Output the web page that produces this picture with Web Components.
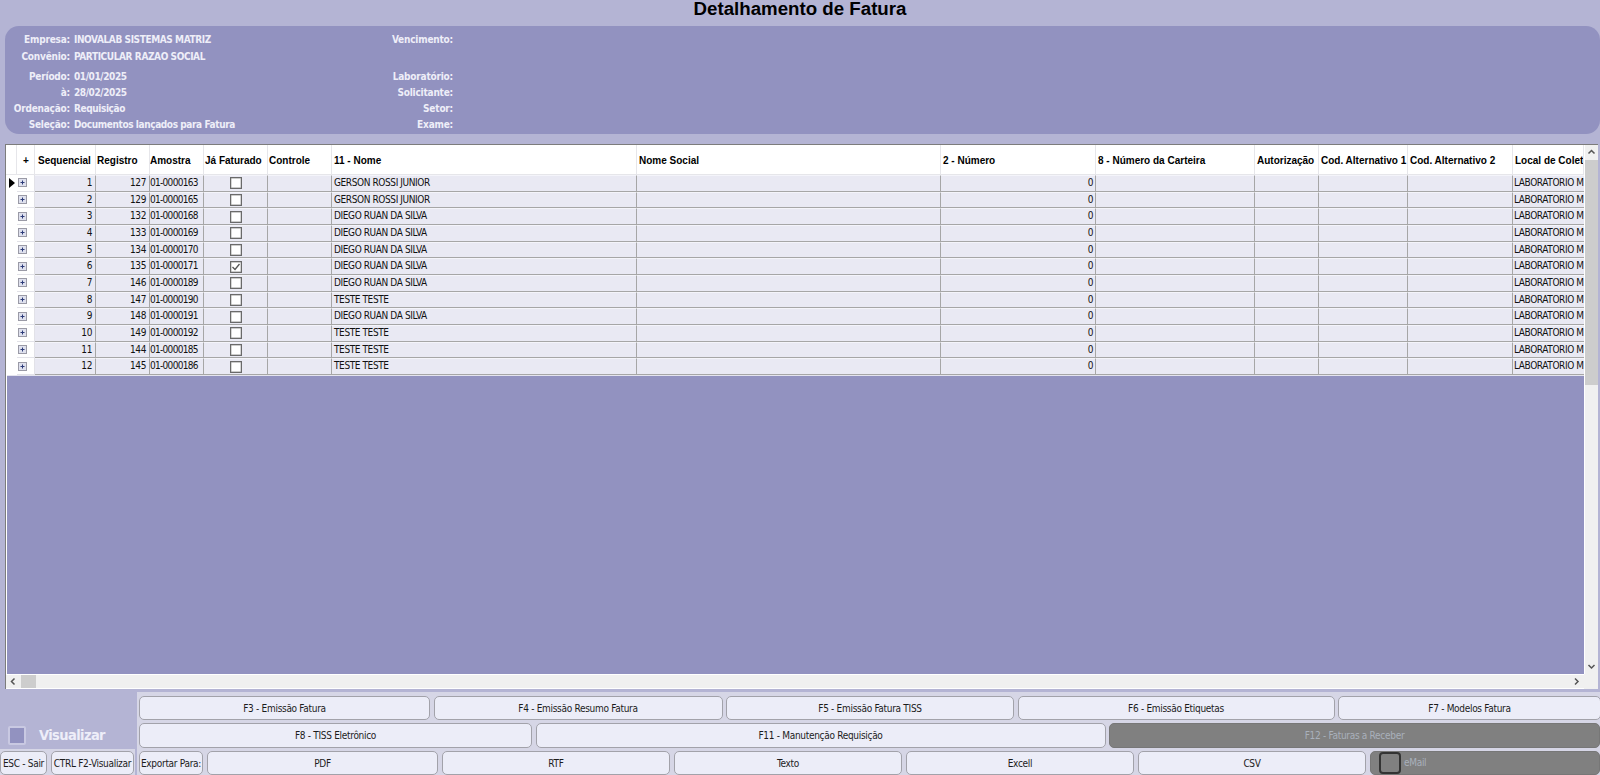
<!DOCTYPE html>
<html lang="pt"><head><meta charset="utf-8"><title>Detalhamento de Fatura</title>
<style>
html,body{margin:0;padding:0;height:100%;overflow:hidden;background:#b4b4d4}
</style></head><body>
<fatura-app>
  <fatura-title>Detalhamento de Fatura</fatura-title>
  <info-panel></info-panel>
  <data-grid></data-grid>
  <fatura-footer></fatura-footer>
</fatura-app>
<script>
const SMALL='"DejaVu Sans Condensed","DejaVu Sans","Liberation Sans",sans-serif';
const COLS='11px 18px 61px 54px 54px 64px 64px 305px 304px 155px 159px 64px 89px 105px 71px';

function open(el,html){const s=el.attachShadow({mode:'open'});s.innerHTML=html;return s;}

class FaturaApp extends HTMLElement{constructor(){super();open(this,`<style>
:host{display:flex;flex-direction:column;width:1600px;height:775px;overflow:hidden;background:#b4b4d4}
</style><slot></slot>`);}}

class FaturaTitle extends HTMLElement{constructor(){super();open(this,`<style>
:host{display:block;height:26px;flex:none;text-align:center;font:bold 18.7px/17px "Liberation Sans",Arial,sans-serif;color:#000}
</style><slot></slot>`);}}

class InfoPanel extends HTMLElement{constructor(){super();
const rows=[['Empresa:','INOVALAB SISTEMAS MATRIZ','Vencimento:',17],['Convênio:','PARTICULAR RAZAO SOCIAL','',20],['Período:','01/01/2025','Laboratório:',16],['à:','28/02/2025','Solicitante:',16],['Ordenação:','Requisição','Setor:',16],['Seleção:','Documentos lançados para Fatura','Exame:',16]];
open(this,`<style>
:host{display:block;flex:none;margin:0 0 10px 5px;height:108px;box-sizing:border-box;padding-top:6px;background:#9292c0;border-radius:14px;font:bold 10px/16px ${SMALL};letter-spacing:-.4px;color:#eeeef8}
.r{display:grid;grid-template-columns:65px 288px 95px;white-space:nowrap}
.l{text-align:right;letter-spacing:-.2px}.v{padding-left:4px}
</style>${rows.map(r=>`<div class="r" style="height:${r[3]}px"><div class="l">${r[0]}</div><div class="v">${r[1]}</div><div class="l">${r[2]}</div></div>`).join('')}`);}}

const CHEV={up:'M1.5 5.5 4.5 2.5 7.5 5.5',down:'M1.5 3 4.5 6 7.5 3',left:'M5.5 1.5 2.5 4.5 5.5 7.5',right:'M3 1.5 6 4.5 3 7.5'};
const chev=d=>`<svg width="9" height="9" viewBox="0 0 9 9"><path d="${CHEV[d]}" fill="none" stroke="#555" stroke-width="1.5"/></svg>`;

class GridCheck extends HTMLElement{constructor(){super();
const on=this.hasAttribute('checked');
open(this,`<style>
:host{display:block;width:12px;height:12px;box-sizing:border-box;background:#fff;border:1px solid #6a6a6a;box-shadow:inset 0 0 0 .4px #999;line-height:0}
</style>${on?'<svg width="10" height="10" viewBox="0 0 10 10"><path d="M1.5 5 4 7.5 8.5 2" fill="none" stroke="#555" stroke-width="1.3"/></svg>':''}`);}}

class GridRow extends HTMLElement{constructor(){super();
const a=k=>this.getAttribute(k)||'';
open(this,`<style>
:host{display:grid;grid-template-columns:${COLS};height:16.67px;flex:none;font:10px/14px ${SMALL};letter-spacing:-.4px;color:#111;overflow:hidden}
.c{box-sizing:border-box;background:#e9e9f3;border-right:1px solid #a6a6a6;border-bottom:1px solid #a6a6a6;border-top:1px solid #f4f4fa;padding:0 2px;white-space:nowrap;overflow:hidden}
.n{text-align:right}
.n3{padding-right:3px}
.am{padding:0;letter-spacing:-.7px}
.ind,.exp{background:#fff;border:0;padding:0;display:flex;align-items:center}
.exp{padding-left:1px;border-right:1px solid #e2e2e8;border-bottom:1px solid #e2e2e8}
.ind{padding-left:3px}
.chk{display:flex;align-items:center;justify-content:center;padding:0 0 0 1px}
.last{border-right:0;padding:0 0 0 1px}
</style>
<div class="c ind">${this.hasAttribute('current')?'<svg width="6" height="10" viewBox="0 0 6 10"><path d="M0 0 6 5 0 10z" fill="#000"/></svg>':''}</div>
<div class="c exp"><svg width="9" height="9" viewBox="0 0 9 9"><rect x=".5" y=".5" width="8" height="8" fill="#dfe1ee" stroke="#9a9aa6"/><path d="M2.5 4.5h4M4.5 2.5v4" stroke="#2b3a78" stroke-width="1"/></svg></div>
<div class="c n n3">${a('seq')}</div><div class="c n n3">${a('reg')}</div><div class="c am">${a('ams')}</div>
<div class="c chk"><grid-check ${this.hasAttribute('fat')?'checked':''}></grid-check></div>
<div class="c"></div><div class="c">${a('nome')}</div><div class="c"></div><div class="c n">0</div><div class="c"></div><div class="c"></div><div class="c"></div><div class="c"></div><div class="c last">LABORATORIO M</div>`);}}

class GridHeader extends HTMLElement{constructor(){super();
const h=['','+','Sequencial','Registro','Amostra','Já Faturado','Controle','11 - Nome','Nome Social','2 - Número','8 - Número da Carteira','Autorização','Cod. Alternativo 1','Cod. Alternativo 2','Local de Coleta'];
const pad=[2,1,3,1,0,1,1,2,2,2,2,2,2,2,2];
open(this,`<style>
:host{display:grid;grid-template-columns:${COLS};height:30px;flex:none;background:#fff;font:bold 10px/32px "Liberation Sans",Arial,sans-serif;color:#000}
div{box-sizing:border-box;border-right:1px solid #e6e6ea;border-bottom:1px solid #e6e6ea;white-space:nowrap;overflow:hidden}
.ctr{text-align:center}
</style>${h.map((t,i)=>`<div class="${i==1?'ctr':''}" style="padding-left:${pad[i]}px">${t}</div>`).join('')}`);}}

class DataGrid extends HTMLElement{constructor(){super();
const R=[[1,127,'163','GERSON ROSSI JUNIOR'],[2,129,'165','GERSON ROSSI JUNIOR'],[3,132,'168','DIEGO RUAN DA SILVA'],[4,133,'169','DIEGO RUAN DA SILVA'],[5,134,'170','DIEGO RUAN DA SILVA'],[6,135,'171','DIEGO RUAN DA SILVA'],[7,146,'189','DIEGO RUAN DA SILVA'],[8,147,'190','TESTE TESTE'],[9,148,'191','DIEGO RUAN DA SILVA'],[10,149,'192','TESTE TESTE'],[11,144,'185','TESTE TESTE'],[12,145,'186','TESTE TESTE']];
open(this,`<style>
:host{display:grid;flex:none;grid-template-columns:1fr 14px;grid-template-rows:1fr 15px;margin-left:5px;width:1593px;height:545px;box-sizing:border-box;border-top:1px solid #7c7c7c;border-left:1px solid #7c7c7c;background:#f0f0f0}
.main{display:flex;flex-direction:column;min-height:0;overflow:hidden;background:#fff}
.rows{display:flex;flex-direction:column;flex:none}
.empty{flex:1;background:#9292c0;margin-left:1px;border-top:1px solid #e4e4ee}
.v{display:flex;flex-direction:column;align-items:center;background:#f0f0f0;border-left:1px solid #fff}
.h{display:flex;align-items:center;background:#f0f0f0;border-top:1px solid #fff;border-bottom:1px solid #fff;box-sizing:border-box}
.btn{flex:none;display:flex;align-items:center;justify-content:center;line-height:0}
.v .btn{height:15px;width:100%}
.h .btn{width:15px;height:100%}
.vt{height:225px;width:100%;background:#cdcdcd;flex:none}
.sp{flex:1}
.ht{width:15px;height:100%;background:#cdcdcd;flex:none}
.corner{background:#f0f0f0}
</style>
<div class="main"><grid-header></grid-header><div class="rows">${R.map((r,i)=>`<grid-row ${i==0?'current':''} ${i==5?'fat':''} seq="${r[0]}" reg="${r[1]}" ams="01-0000${r[2]}" nome="${r[3]}"></grid-row>`).join('')}</div><div class="empty"></div></div>
<div class="v"><div class="btn">${chev('up')}</div><div class="vt"></div><div class="sp"></div><div class="btn">${chev('down')}</div></div>
<div class="h"><div class="btn">${chev('left')}</div><div class="ht"></div><div class="sp"></div><div class="btn">${chev('right')}</div></div>
<div class="corner"></div>`);}}

class ActionBtn extends HTMLElement{constructor(){super();open(this,`<style>
:host{display:flex;align-items:center;justify-content:center;box-sizing:border-box;min-width:0;padding-top:1px;background:#ecedf8;border:1px solid #a2a2aa;border-radius:5px;font:10px/14px ${SMALL};letter-spacing:-.3px;color:#1c1c1c;white-space:nowrap;overflow:hidden}
:host([off]){background:#808080;border-color:#777;color:#a9b0bb}
:host([start]){justify-content:flex-start;padding:0 0 0 8px;gap:3px}
</style><slot></slot>`);}}

class MailBox extends HTMLElement{constructor(){super();open(this,`<style>
:host{display:block;flex:none;width:22px;height:22px;box-sizing:border-box;border:2px solid #333;border-radius:4px;background:#808080}
</style>`);}}

class FaturaFooter extends HTMLElement{constructor(){super();open(this,`<style>
:host{display:flex;flex:none;height:86px;padding-top:3px;box-sizing:border-box}
.left{width:137px;flex:none;display:flex;flex-direction:column}
.vis{flex:1;display:flex;align-items:flex-end;padding:0 0 4px 8px;gap:13px}
.box{width:18px;height:19px;box-sizing:border-box;background:#9292c0;border:2px solid #c9c9e2;border-radius:2px;flex:none}
.txt{font:bold 14.5px/19px ${SMALL};letter-spacing:-.6px;color:#eeeef9}
.low{flex:none;height:26px;padding-top:2px;box-sizing:border-box;width:135px;background:#d6d6e6;display:grid;grid-template-columns:47px 83px;column-gap:4px}
.right{flex:1;background:#d6d6e6;padding:4px 0 0 2px;display:flex;flex-direction:column;gap:3px;min-width:0}
.row{display:grid;column-gap:3.5px;flex:none}
</style>
<div class="left"><div class="vis"><div class="box"></div><div class="txt">Visualizar</div></div>
<div class="low"><action-btn>ESC - Sair</action-btn><action-btn>CTRL F2-Visualizar</action-btn></div></div>
<div class="right">
<div class="row" style="height:24px;grid-template-columns:291px 289px 288px 317px 263px"><action-btn>F3 - Emissão Fatura</action-btn><action-btn>F4 - Emissão Resumo Fatura</action-btn><action-btn>F5 - Emissão Fatura TISS</action-btn><action-btn>F6 - Emissão Etiquetas</action-btn><action-btn>F7 - Modelos Fatura</action-btn></div>
<div class="row" style="height:25px;grid-template-columns:393px 570px 491px"><action-btn>F8 - TISS Eletrônico</action-btn><action-btn>F11 - Manutenção Requisição</action-btn><action-btn off>F12 - Faturas a Receber</action-btn></div>
<div class="row" style="height:24px;column-gap:4px;grid-template-columns:64px 231px 228px 228px 228px 228px 230px"><action-btn>Exportar Para:</action-btn><action-btn>PDF</action-btn><action-btn>RTF</action-btn><action-btn>Texto</action-btn><action-btn>Excell</action-btn><action-btn>CSV</action-btn><action-btn off start><mail-box></mail-box><span>eMail</span></action-btn></div>
</div>`);}}

customElements.define('mail-box',MailBox);
customElements.define('grid-check',GridCheck);
customElements.define('grid-row',GridRow);
customElements.define('grid-header',GridHeader);
customElements.define('data-grid',DataGrid);
customElements.define('action-btn',ActionBtn);
customElements.define('fatura-footer',FaturaFooter);
customElements.define('info-panel',InfoPanel);
customElements.define('fatura-title',FaturaTitle);
customElements.define('fatura-app',FaturaApp);
</script></body></html>
